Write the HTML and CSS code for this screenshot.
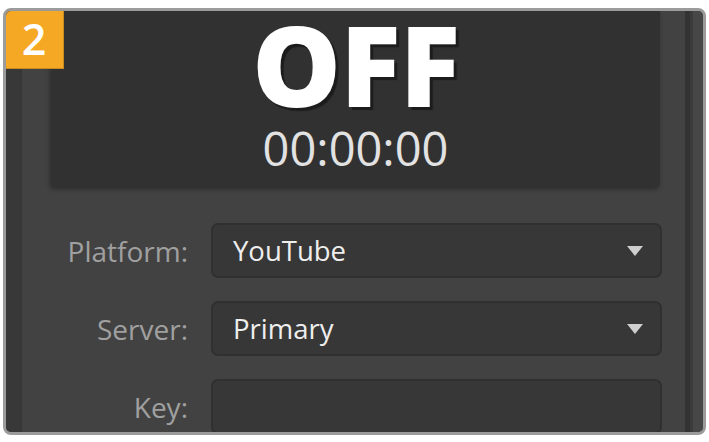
FILE: index.html
```html
<!DOCTYPE html>
<html lang="en">
<head>
    <meta charset="UTF-8">
    <meta name="viewport" content="width=device-width, initial-scale=1.0">
    <title>Live Stream</title>
    <link rel="stylesheet" href="styles.css">
</head>
<body>

    <div class="frame">
        <div class="badge">2</div>

        <div class="edge-left"></div>

        <div class="main">
            <div class="display">
                <div class="status">OFF</div>
                <div class="timer">00:00:00</div>
            </div>

            <div class="form">
                <label class="label">Platform:</label>
                <div class="select">
                    <span>YouTube</span>
                    <span class="arrow"></span>
                </div>

                <label class="label">Server:</label>
                <div class="select">
                    <span>Primary</span>
                    <span class="arrow"></span>
                </div>

                <label class="label">Key:</label>
                <div class="select"></div>
            </div>
        </div>

        <div class="edge-right">
            <div class="groove"></div>
            <div class="rail"></div>
        </div>
    </div>

</body>
</html>
```

FILE: styles.css
```css
html, body {
    margin: 0;
    padding: 0;
    background-color: #ffffff;
}

body {
    font-family: "Open Sans", "Liberation Sans", sans-serif;
}

.frame {
    position: relative;
    box-sizing: border-box;
    margin: 8px 3px 0 3px;
    width: 703px;
    height: 427px;
    border: 3px solid #9b9b9b;
    border-radius: 8px;
    background-color: #414141;
    display: flex;
    overflow: hidden;
}

.badge {
    position: absolute;
    top: -1px;
    left: -1px;
    width: 58px;
    height: 58px;
    background-color: #f4a823;
    border-right: 1px solid #c98a1e;
    border-bottom: 1px solid #c98a1e;
    color: #ffffff;
    font-size: 43px;
    font-weight: 600;
    line-height: 58px;
    text-align: center;
    z-index: 2;
}

.edge-left {
    width: 16px;
    background-color: #383838;
    flex-shrink: 0;
}

.main {
    flex: 1;
    padding: 0 25px 0 29px;
    background-color: #424242;
}

.display {
    height: 176px;
    background-color: #313131;
    border-radius: 0 0 4px 4px;
    box-shadow: -1px 2px 5px rgba(0, 0, 0, 0.35);
    display: flex;
    flex-direction: column;
    align-items: center;
}

.status {
    margin-top: 3px;
    font-size: 112px;
    font-weight: 800;
    line-height: 100px;
    color: #ffffff;
    letter-spacing: -1px;
    text-shadow: 3px 3px 1px #1c1c1c;
}

.timer {
    margin-top: 11px;
    font-size: 47px;
    line-height: 47px;
    color: #e2e2e2;
}

.form {
    margin-top: 36px;
    display: grid;
    grid-template-columns: 137px 1fr;
    column-gap: 23px;
    row-gap: 23px;
    align-items: center;
}

.label {
    text-align: right;
    font-size: 28px;
    color: #a0a0a0;
}

.select {
    box-sizing: border-box;
    height: 55px;
    margin-right: -2px;
    padding: 0 17px 0 20px;
    background-color: #373737;
    border: 2px solid #303030;
    border-radius: 7px;
    display: flex;
    align-items: center;
    justify-content: space-between;
    font-size: 27.5px;
    color: #eeeeee;
}

.arrow {
    width: 0;
    height: 0;
    border-left: 8px solid transparent;
    border-right: 8px solid transparent;
    border-top: 10px solid #cfcfcf;
}

.edge-right {
    display: flex;
    flex-shrink: 0;
}

.groove {
    width: 5px;
    background-color: #333333;
    border-right: 3px solid #3b3b3b;
}

.rail {
    width: 10px;
    background-color: #474747;
}
```
